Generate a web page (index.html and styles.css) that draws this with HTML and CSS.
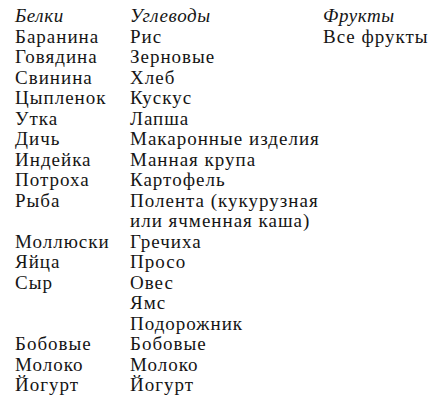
FILE: index.html
```html
<!DOCTYPE html>
<html>
<head>
<meta charset="utf-8">
<link rel="stylesheet" href="styles.css">
</head>
<body>
<div class="food">
  <div class="h">Белки</div><div class="h">Углеводы</div><div class="h">Фрукты</div>
  <div>Баранина</div><div>Рис</div><div>Все фрукты</div>
  <div>Говядина</div><div>Зерновые</div><div></div>
  <div>Свинина</div><div>Хлеб</div><div></div>
  <div>Цыпленок</div><div>Кускус</div><div></div>
  <div>Утка</div><div>Лапша</div><div></div>
  <div>Дичь</div><div>Макаронные изделия</div><div></div>
  <div>Индейка</div><div>Манная крупа</div><div></div>
  <div>Потроха</div><div>Картофель</div><div></div>
  <div>Рыба</div><div>Полента (кукурузная<br>или ячменная каша)</div><div></div>
  <div>Моллюски</div><div>Гречиха</div><div></div>
  <div>Яйца</div><div>Просо</div><div></div>
  <div>Сыр</div><div>Овес<br>Ямс<br>Подорожник</div><div></div>
  <div>Бобовые</div><div>Бобовые</div><div></div>
  <div>Молоко</div><div>Молоко</div><div></div>
  <div>Йогурт</div><div>Йогурт</div><div></div>
</div>
</body>
</html>
```
FILE: styles.css
```css
body {
  margin: 0;
}
.food {
  display: grid;
  grid-template-columns: 115px 193px auto;
  padding: 6px 0 0 15px;
  font-family: "Liberation Serif";
  font-size: 19px;
  line-height: 20.5px;
  letter-spacing: 1px;
  color: #151515;
  white-space: nowrap;
}
.h {
  font-style: italic;
  letter-spacing: 0.6px;
}
```
